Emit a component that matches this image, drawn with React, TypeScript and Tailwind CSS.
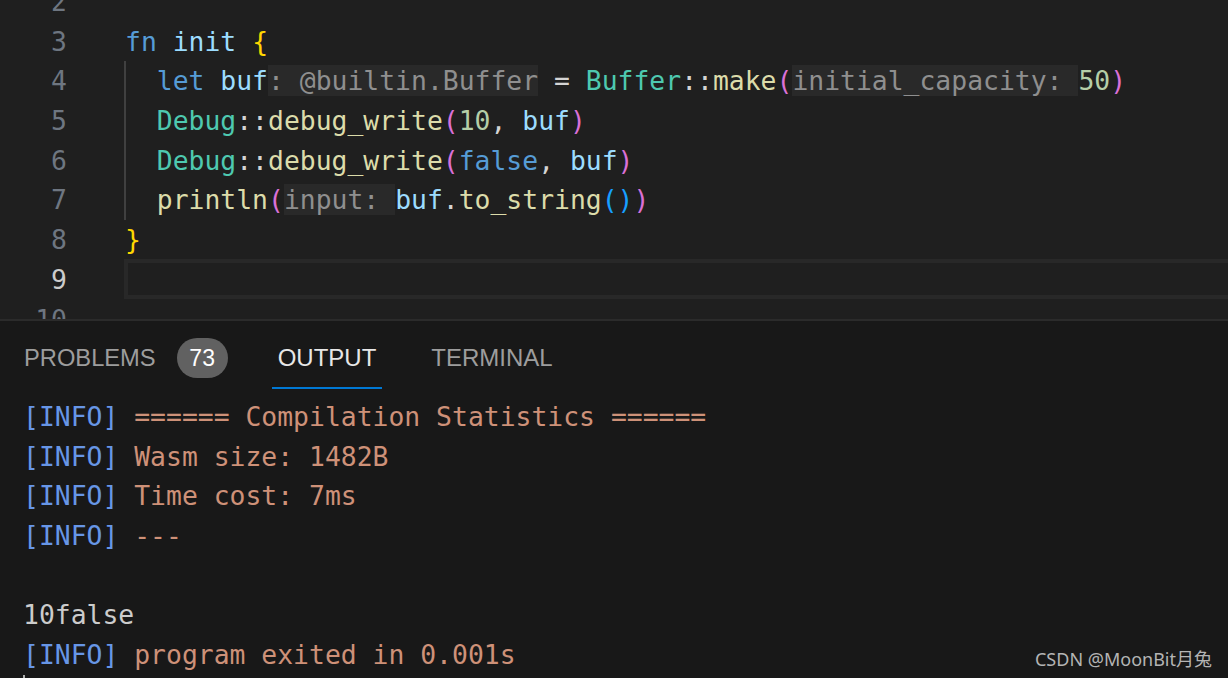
import React from "react";

const MONO = { fontFamily: '"DejaVu Sans Mono", "Liberation Mono", monospace' };

type Seg = { t: string; c?: string; hint?: boolean };

const K = "text-[#569cd6]";
const V = "text-[#9cdcfe]";
const T = "text-[#4ec9b0]";
const F = "text-[#dcdcaa]";
const P = "text-[#d4d4d4]";
const O = "text-[#da70d6]";
const G = "text-[#ffd700]";
const N = "text-[#b5cea8]";
const B = "text-[#179fff]";

const lines: { n: number; segs: Seg[]; guide?: boolean; active?: boolean }[] = [
  { n: 2, segs: [] },
  {
    n: 3,
    segs: [
      { t: "fn", c: K },
      { t: " " },
      { t: "init", c: V },
      { t: " " },
      { t: "{", c: G },
    ],
  },
  {
    n: 4,
    guide: true,
    segs: [
      { t: "  " },
      { t: "let", c: K },
      { t: " " },
      { t: "buf", c: V },
      { t: ": @builtin.Buffer", hint: true },
      { t: " = ", c: P },
      { t: "Buffer", c: T },
      { t: "::", c: P },
      { t: "make", c: F },
      { t: "(", c: O },
      { t: "initial_capacity: ", hint: true },
      { t: "50", c: N },
      { t: ")", c: O },
    ],
  },
  {
    n: 5,
    guide: true,
    segs: [
      { t: "  " },
      { t: "Debug", c: T },
      { t: "::", c: P },
      { t: "debug_write", c: F },
      { t: "(", c: O },
      { t: "10", c: N },
      { t: ", ", c: P },
      { t: "buf", c: V },
      { t: ")", c: O },
    ],
  },
  {
    n: 6,
    guide: true,
    segs: [
      { t: "  " },
      { t: "Debug", c: T },
      { t: "::", c: P },
      { t: "debug_write", c: F },
      { t: "(", c: O },
      { t: "false", c: K },
      { t: ", ", c: P },
      { t: "buf", c: V },
      { t: ")", c: O },
    ],
  },
  {
    n: 7,
    guide: true,
    segs: [
      { t: "  " },
      { t: "println", c: F },
      { t: "(", c: O },
      { t: "input: ", hint: true },
      { t: "buf", c: V },
      { t: ".", c: P },
      { t: "to_string", c: F },
      { t: "()", c: B },
      { t: ")", c: O },
    ],
  },
  { n: 8, segs: [{ t: "}", c: G }] },
  { n: 9, segs: [], active: true },
  { n: 10, segs: [] },
];

const out: { info?: boolean; t: string }[] = [
  { info: true, t: "====== Compilation Statistics ======" },
  { info: true, t: "Wasm size: 1482B" },
  { info: true, t: "Time cost: 7ms" },
  { info: true, t: "---" },
  { t: "" },
  { t: "10false" },
  { info: true, t: "program exited in 0.001s" },
];

export default function App() {
  return (
    <div className="relative flex h-[678px] w-[1228px] flex-col overflow-hidden bg-[#1f1f1f]">
      {/* Editor */}
      <div className="h-[319px] shrink-0 overflow-hidden text-[26.4px]" style={MONO}>
        <div className="mt-[-18px]">
          {lines.map((l) => (
            <div key={l.n} className="flex h-[39.7px] leading-[39.7px]">
              <div
                className={`w-[67px] shrink-0 text-right ${
                  l.active ? "text-[#cccccc]" : "text-[#6e7681]"
                }`}
              >
                {l.n}
              </div>
              <div className="w-[57px] shrink-0" />
              {l.active ? (
                <div className="mr-[-20px] mt-[-1px] h-[39.7px] flex-1 border-[4px] border-[#282828]" />
              ) : (
                <div className="relative flex-1 whitespace-pre pl-[1px]">
                  {l.guide && (
                    <span className="absolute bottom-0 left-0 top-0 w-[2px] bg-[#404040]" />
                  )}
                  {l.segs.map((s, i) =>
                    s.hint ? (
                      <span key={i} className="bg-[#292929] text-[#8f8f8f]">
                        {s.t}
                      </span>
                    ) : (
                      <span key={i} className={s.c ?? "text-[#d4d4d4]"}>
                        {s.t}
                      </span>
                    )
                  )}
                </div>
              )}
            </div>
          ))}
        </div>
      </div>

      <div className="h-[2px] shrink-0 bg-[#2b2b2b]" />

      {/* Panel */}
      <div className="flex flex-1 flex-col bg-[#181818]">
        <div
          className="flex h-[74px] shrink-0 items-start pl-[24px] pt-[22px] text-[23.7px]"
          style={{ fontFamily: '"Liberation Sans", Arial, sans-serif' }}
        >
          <div className="flex h-[30px] items-center">
            <span className="leading-[30px] text-[#9d9d9d]">PROBLEMS</span>
            <span className="ml-[21px] flex h-[40px] w-[51px] items-center justify-center rounded-full bg-[#616161] text-[23px] text-white">
              73
            </span>
          </div>
          <div className="ml-[44px] flex flex-col">
            <span className="px-[6px] text-[24px] leading-[30px] text-[#e7e7e7]">OUTPUT</span>
            <span className="mt-[13.5px] h-[2px] bg-[#0078d4]" />
          </div>
          <div className="ml-[44px] px-[5px] text-[24px] leading-[30px] text-[#9d9d9d]">
            TERMINAL
          </div>
        </div>

        <div className="pl-[23px] pt-[2px] text-[26.4px] leading-[39.7px]" style={MONO}>
          {out.map((o, i) => (
            <div key={i} className="h-[39.7px] whitespace-pre">
              {o.info ? (
                <>
                  <span className="text-[#6796e6]">[INFO]</span>
                  <span className="text-[#ce9178]"> {o.t}</span>
                </>
              ) : (
                <span className="text-[#cccccc]">{o.t}</span>
              )}
            </div>
          ))}
          <div className="flex h-[39.7px] items-start">
            <span className="h-[30px] w-[2px] bg-[#aeafad]" />
          </div>
        </div>
      </div>

      <div
        className="absolute bottom-[5px] right-[16px] text-[18px] text-[#b4b4b4]"
        style={{ fontFamily: '"Noto Sans", "Noto Sans CJK SC", sans-serif' }}
      >
        CSDN @MoonBit月兔
      </div>
    </div>
  );
}
